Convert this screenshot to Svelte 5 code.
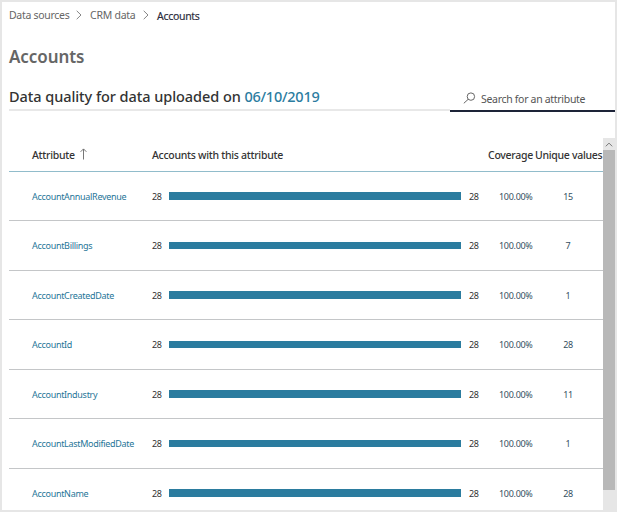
<script>
  const rows = [
    { name: 'AccountAnnualRevenue', unique: 15 },
    { name: 'AccountBillings', unique: 7 },
    { name: 'AccountCreatedDate', unique: 1 },
    { name: 'AccountId', unique: 28 },
    { name: 'AccountIndustry', unique: 11 },
    { name: 'AccountLastModifiedDate', unique: 1 },
    { name: 'AccountName', unique: 28 }
  ];
</script>

<div class="page">
  <nav class="crumbs">
    <span class="c1">Data sources</span>
    <svg class="chev" width="6" height="10" viewBox="0 0 6 10"><path d="M.7 .8 5 5 .7 9.2" /></svg>
    <span class="c2">CRM data</span>
    <svg class="chev" width="6" height="10" viewBox="0 0 6 10"><path d="M.7 .8 5 5 .7 9.2" /></svg>
    <span class="current">Accounts</span>
  </nav>
  <h1><span>Accounts</span></h1>
  <div class="bar">
    <h2><span>Data quality for data uploaded on</span> <b>06/10/2019</b></h2>
    <div class="search">
      <svg width="13" height="12" viewBox="0 0 13 12"><circle cx="7.9" cy="4.6" r="3.7" /><path d="M5.2 7.3 .8 11.3" /></svg>
      <span>Search for an attribute</span>
    </div>
  </div>
  <div class="body">
    <div class="table">
      <div class="head">
        <div class="name"><span class="h-attr">Attribute</span>
          <svg width="7" height="12" viewBox="0 0 7 12"><path d="M3.5 11.5V1M.6 3.8 3.5 .9 6.4 3.8" /></svg>
        </div>
        <div class="h-acc"><span>Accounts with this attribute</span></div>
        <div class="h-cov"><span>Coverage</span></div>
        <div class="h-uni"><span>Unique values</span></div>
      </div>
      {#each rows as row}
        <div class="row">
          <div class="name"><span>{row.name}</span></div>
          <div class="num"><span>28</span></div>
          <div class="fill"></div>
          <div class="num right"><span>28</span></div>
          <div class="cov"><span>100.00%</span></div>
          <div class="uni"><span>{row.unique}</span></div>
        </div>
      {/each}
    </div>
    <div class="scroll">
      <div class="up"><svg width="8" height="5" viewBox="0 0 8 5"><path d="M.8 4.3 4 1.1 7.2 4.3" /></svg></div>
      <div class="thumb"></div>
    </div>
  </div>
</div>

<style>
  .page {
    box-sizing: border-box;
    width: 617px;
    height: 512px;
    border: 2px solid #e6e6e6;
    background: #fff;
    overflow: hidden;
    font-family: "Noto Sans", "Open Sans", sans-serif;
    color: #333;
    white-space: nowrap;
  }
  svg { fill: none; flex: none; display: block; }
  h1, h2 { margin: 0; }
  .crumbs {
    display: flex;
    height: 26px;
    padding-left: 7px;
    align-items: center;
    font-size: 10.5px;
    letter-spacing: -0.3px;
    color: #666;
  }
  .c1 { width: 67px; }
  .c2 { width: 54px; margin-left: 8px; letter-spacing: -0.25px; }
  .chev { stroke: #858585; }
  .c2 + .chev { margin-left: -1px; }
  .current { margin-left: 8px; padding-top: 2px; color: #2b2b3c; -webkit-text-stroke: .15px; }
  h1 {
    height: 56px;
    padding-left: 7px;
    line-height: 58px;
    font-size: 17px;
    font-weight: 600;
    letter-spacing: -0.08px;
    color: #666;
  }
  .bar { display: flex; height: 28px; margin-left: 7px; }
  h2 {
    box-sizing: border-box;
    width: 441px;
    height: 27px;
    border-bottom: 2px solid #e8e8e8;
    line-height: 24px;
    font-size: 14.5px;
    font-weight: 500;
    letter-spacing: -0.06px;
  }
  h2 b { font-weight: 500; letter-spacing: -0.25px; color: #2b7c9f; }
  .search {
    box-sizing: border-box;
    display: flex;
    align-items: center;
    width: 165px;
    height: 28px;
    padding: 4px 0 0 13px;
    border-bottom: 2px solid #1d2438;
    font-size: 10.5px;
    letter-spacing: -0.31px;
    color: #555;
  }
  .search svg { stroke: #666; margin: -2px 5px 0 0; }
  .body { display: flex; height: 372px; margin: 26px 0 0 7px; }
  .table { width: 594px; }
  .head, .row { box-sizing: border-box; display: flex; border-bottom: 1px solid #c4c6c8; }
  .head {
    height: 34px;
    border-bottom-color: #91bccb;
    line-height: 34px;
    font-size: 10.5px;
    font-weight: 500;
    letter-spacing: -0.29px;
  }
  .head .name { display: flex; width: 120px; }
  .head svg { margin: 10px 0 0 5px; stroke: #777; }
  .h-acc { width: 336px; }
  .h-cov { width: 47px; }
  .name { box-sizing: border-box; width: 120px; margin-left: 23px; }
  .row {
    height: 50px;
    line-height: 49px;
    font-size: 9px;
    letter-spacing: -0.3px;
    color: #333;
  }
  .row:nth-child(even) { height: 49px; }
  .row .name { color: #1f7698; }
  .num { width: 17px; }
  .fill { width: 292px; height: 7px; margin-top: 21px; background: #2b7c9f; }
  .row:nth-child(even) .fill { height: 8px; margin-top: 20px; }
  .right { padding-left: 8px; width: 30px; box-sizing: border-box; }
  .cov { margin-left: 8px; width: 34px; color: #35505f; }
  .uni { width: 40px; margin-left: 15px; text-align: center; color: #35505f; }
  .scroll { width: 12px; height: 372px; background: #e6e6e6; }
  .up { display: flex; height: 12px; align-items: center; justify-content: center; }
  .up svg { stroke: #777; }
  .thumb { height: 340px; background: #b8b8b8; }
</style>
